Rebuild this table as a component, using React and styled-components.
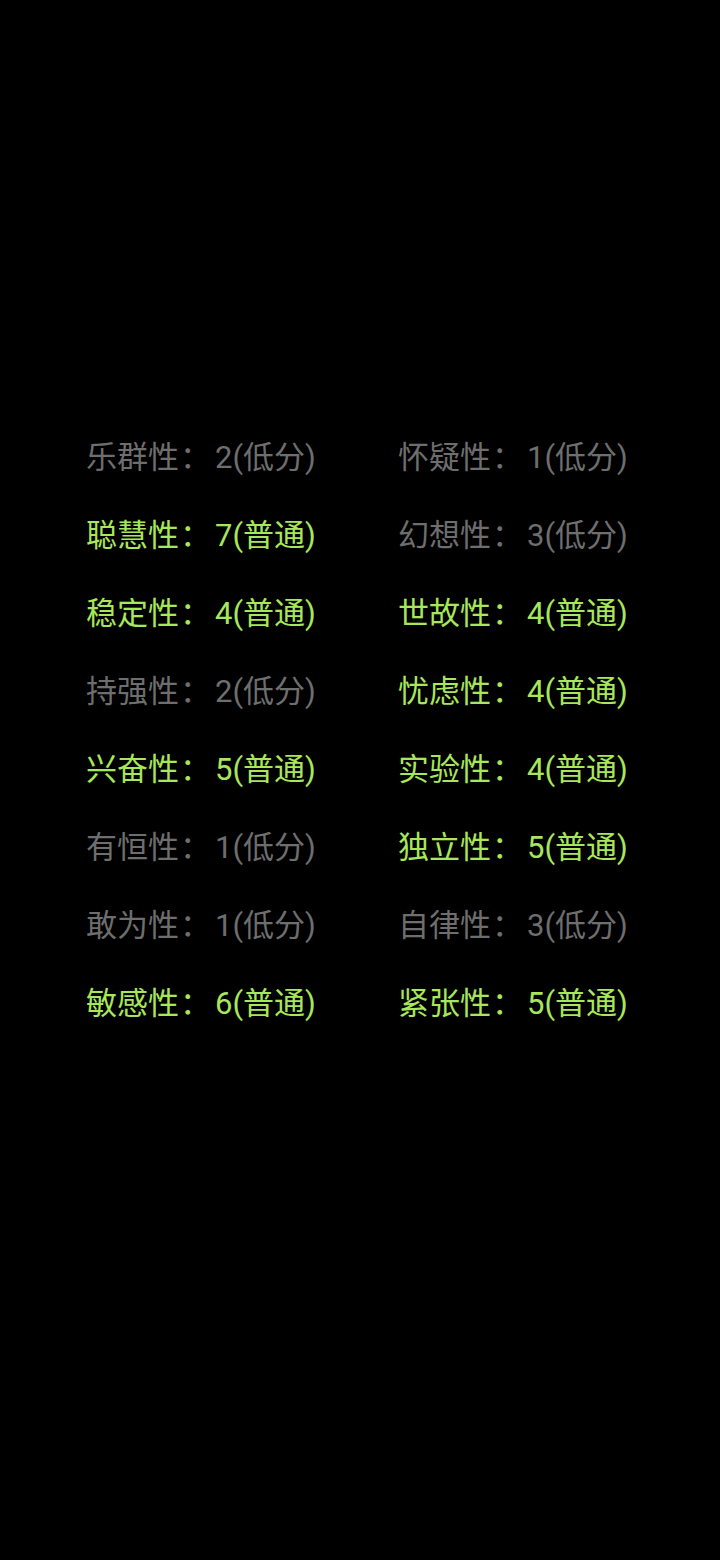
import styled, { createGlobalStyle } from "styled-components";

const GlobalStyle = createGlobalStyle`
body {
  margin : 0;
  background-color : #000000;
  font-family : Roboto, "Noto Sans CJK SC", sans-serif;
}
`

const StyledScreen = styled.div`
width : 720px;
height : 1560px;
background-color : #000000;
padding : 415px 0 0 86px;
box-sizing : border-box;
`

const StyledGrid = styled.div`
display : grid;
grid-template-columns : 312px 312px;
grid-auto-rows : 78px;
`

const StyledTrait = styled.div`
display : flex;
align-items : center;
font-size : 31px;
white-space : nowrap;
color : ${props => props.$normal ? "#a7e75b" : "#6e6e6e"};

.traitColon {
  font-family : "Noto Sans CJK SC", sans-serif;
  margin : 0 4px 0 1px;
}
`

const traits = [
  ["乐群性", 2, false], ["怀疑性", 1, false],
  ["聪慧性", 7, true], ["幻想性", 3, false],
  ["稳定性", 4, true], ["世故性", 4, true],
  ["持强性", 2, false], ["忧虑性", 4, true],
  ["兴奋性", 5, true], ["实验性", 4, true],
  ["有恒性", 1, false], ["独立性", 5, true],
  ["敢为性", 1, false], ["自律性", 3, false],
  ["敏感性", 6, true], ["紧张性", 5, true],
];

function App() {
  return (
    <>
      <GlobalStyle />
      <StyledScreen>
        <StyledGrid>
          {traits.map(([name, score, normal]) => (
            <StyledTrait key={name} $normal={normal}>
              {name}
              <span className="traitColon">：</span>
              {`${score}(${normal ? "普通" : "低分"})`}
            </StyledTrait>
          ))}
        </StyledGrid>
      </StyledScreen>
    </>
  );
}

export default App;
